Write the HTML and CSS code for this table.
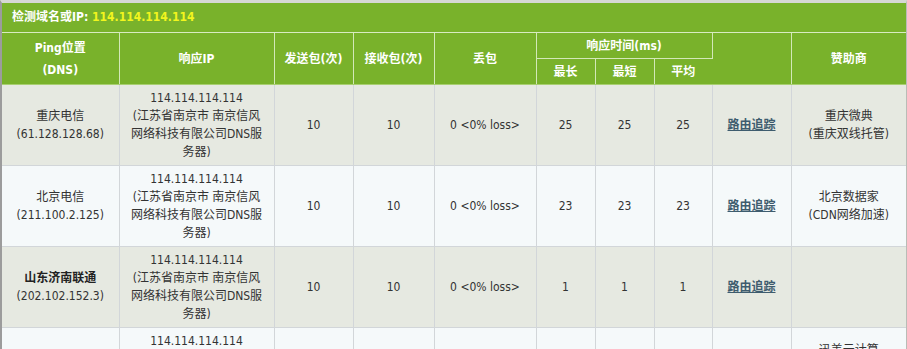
FILE: index.html
```html
<!DOCTYPE html>
<html lang="zh-CN">
<head>
<meta charset="utf-8">
<title>Ping检测</title>
<link rel="stylesheet" href="styles.css">
</head>
<body>
<div class="wrap">
  <div class="title">检测域名或IP: <span class="ip">114.114.114.114</span></div>
  <table class="grid">
    <colgroup>
      <col class="c1"><col class="c2"><col class="c3"><col class="c4"><col class="c5">
      <col class="c6"><col class="c7"><col class="c8"><col class="c9"><col class="c10">
    </colgroup>
    <thead>
      <tr class="h1">
        <th rowspan="2" class="two">Ping位置<br>(DNS)</th>
        <th rowspan="2">响应IP</th>
        <th rowspan="2">发送包(次)</th>
        <th rowspan="2">接收包(次)</th>
        <th rowspan="2">丢包</th>
        <th colspan="3">响应时间(ms)</th>
        <th rowspan="2"></th>
        <th rowspan="2">赞助商</th>
      </tr>
      <tr class="h2">
        <th>最长</th>
        <th>最短</th>
        <th>平均</th>
      </tr>
    </thead>
    <tbody>
      <tr class="odd">
        <td>重庆电信<br>(61.128.128.68)</td>
        <td>114.114.114.114<br>(江苏省南京市 南京信风<br>网络科技有限公司DNS服<br>务器)</td>
        <td>10</td><td>10</td><td>0 &lt;0% loss&gt;</td>
        <td>25</td><td>25</td><td>25</td>
        <td><a href="#">路由追踪</a></td>
        <td>重庆微典<br>(重庆双线托管)</td>
      </tr>
      <tr class="even">
        <td>北京电信<br>(211.100.2.125)</td>
        <td>114.114.114.114<br>(江苏省南京市 南京信风<br>网络科技有限公司DNS服<br>务器)</td>
        <td>10</td><td>10</td><td>0 &lt;0% loss&gt;</td>
        <td>23</td><td>23</td><td>23</td>
        <td><a href="#">路由追踪</a></td>
        <td>北京数据家<br>(CDN网络加速)</td>
      </tr>
      <tr class="odd">
        <td><b>山东济南联通</b><br>(202.102.152.3)</td>
        <td>114.114.114.114<br>(江苏省南京市 南京信风<br>网络科技有限公司DNS服<br>务器)</td>
        <td>10</td><td>10</td><td>0 &lt;0% loss&gt;</td>
        <td>1</td><td>1</td><td>1</td>
        <td><a href="#">路由追踪</a></td>
        <td></td>
      </tr>
      <tr class="even">
        <td>上海电信<br>(202.96.209.133)</td>
        <td>114.114.114.114<br>(江苏省南京市 南京信风<br>网络科技有限公司DNS服<br>务器)</td>
        <td>10</td><td>10</td><td>0 &lt;0% loss&gt;</td>
        <td>30</td><td>30</td><td>30</td>
        <td><a href="#">路由追踪</a></td>
        <td>迅美云计算<br>(云主机)<br>(多线托管)</td>
      </tr>
    </tbody>
  </table>
</div>
</body>
</html>
```

FILE: styles.css
```css
html, body {
  margin: 0;
  padding: 0;
  background: #ffffff;
}
body {
  font-family: Tahoma, "DejaVu Sans Condensed", "Liberation Sans", "Noto Sans CJK SC", sans-serif;
  font-size: 12px;
  color: #333333;
}
.wrap {
  width: 904px;
  border-top: 3px solid #d6d8d4;
  border-left: 2px solid #9c9c9c;
  border-right: 1px solid #b9bcb6;
  background: #79b22b;
}
.title {
  height: 29px;
  line-height: 29px;
  padding-left: 10px;
  color: #ffffff;
  font-weight: bold;
  font-size: 12px;
  border-bottom: 1px solid #d9ebc2;
}
.title .ip {
  color: #f2f51e;
}
.grid {
  width: 904px;
  border-collapse: collapse;
  table-layout: fixed;
}
.c1 { width: 117px; }
.c2 { width: 155px; }
.c3 { width: 79px; }
.c4 { width: 81px; }
.c5 { width: 102px; }
.c6 { width: 59px; }
.c7 { width: 59px; }
.c8 { width: 58px; }
.c9 { width: 79px; }
.c10 { width: auto; }
.grid th {
  background: #79b22b;
  color: #ffffff;
  font-weight: bold;
  font-size: 12px;
  line-height: 18px;
  padding: 0 2px;
  text-align: center;
  vertical-align: middle;
  border-right: 1px solid #d3e8b8;
  border-bottom: 1px solid #d3e8b8;
}
.grid th.two { line-height: 22px; }
.grid .h1 th, .grid .h2 th { height: 25px; }
.grid thead tr:last-child th,
.grid .h1 th[rowspan] {
  border-bottom-color: #a8cf70;
}
.grid th:last-child, .grid td:last-child { border-right: none; }
.grid td {
  height: 72px;
  padding: 4px 2px;
  line-height: 18px;
  text-align: center;
  vertical-align: middle;
  border-right: 1px solid #d2d6d9;
  border-bottom: 1px solid #d2d6d9;
}
.grid tbody tr:first-child td { border-top: 1px solid #a8cf70; }
.odd td { background: #e6e9e1; }
.even td { background: #f5f9fa; }
.grid td b { font-weight: bold; color: #222222; }
.grid a {
  color: #3e5c6e;
  font-weight: bold;
  text-decoration: underline;
}
```
